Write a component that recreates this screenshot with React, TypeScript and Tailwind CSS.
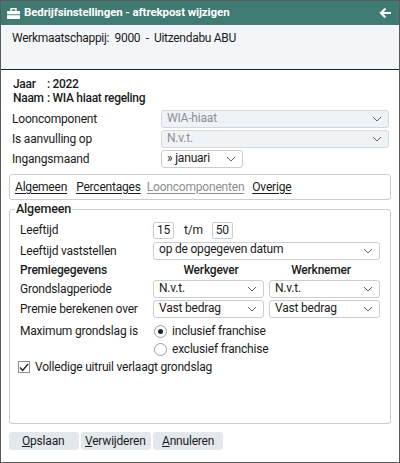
import React, { useState } from 'react';

const Chevron = () => (
  <svg width="10" height="6" viewBox="0 0 10 6" className="shrink-0">
    <path d="M1 1l4 4 4-4" fill="none" stroke="#666" strokeWidth="1" />
  </svg>
);

const Select = ({ value, width, disabled }: { value: string; width: string; disabled?: boolean }) => (
  <div
    className={`${width} h-[18px] flex items-center justify-between pl-[5px] pr-[6px] border rounded-[3px] ${
      disabled ? 'bg-[#f0f3f6] border-[#d3d8dc] text-[#8a8f94]' : 'bg-white border-[#c9ced2] text-[#1b1b1b]'
    }`}
  >
    <span className="leading-none -mt-[3px]">{value}</span>
    <Chevron />
  </div>
);

const Radio = ({ on, label, onClick }: { on: boolean; label: string; onClick: () => void }) => (
  <label className="flex items-center h-[18px] gap-[5px] pl-[1px]" onClick={onClick}>
    <span className="w-[13px] h-[13px] rounded-full border border-[#9aa0a5] bg-white flex items-center justify-center">
      {on && <span className="w-[5px] h-[5px] rounded-full bg-[#222]" />}
    </span>
    {label}
  </label>
);

export default function App() {
  const [incl, setIncl] = useState(true);
  const [checked, setChecked] = useState(true);

  return (
    <div
      className="w-[400px] h-[463px] bg-white border border-[#5a5a5a] flex flex-col text-[12px] tracking-[-0.2px] text-[#1b1b1b]"
      style={{ fontFamily: 'Roboto, "Liberation Sans", sans-serif' }}
    >
      {/* titelbalk */}
      <div className="h-[24px] bg-[#3f7b72] flex items-center justify-between pl-[6px] pr-[7px] shrink-0">
        <div className="flex items-center gap-[4px] text-white font-bold text-[11.5px] tracking-[-0.1px]">
          <svg width="13" height="11" viewBox="0 0 13 11">
            <rect x="4" y="0.7" width="5" height="2.8" fill="none" stroke="white" strokeWidth="1.3" />
            <rect x="0" y="3" width="13" height="3.3" fill="white" />
            <rect x="0" y="7.2" width="13" height="3.8" fill="white" />
          </svg>
          <span>Bedrijfsinstellingen - aftrekpost wijzigen</span>
        </div>
        <svg width="13" height="12" viewBox="0 0 13 12">
          <path d="M12 6H2M6.5 1.5L2 6l4.5 4.5" fill="none" stroke="white" strokeWidth="2.2" />
        </svg>
      </div>

      <div className="h-[45px] bg-[#f3f6f9] border-b border-[#222] pl-[11px] pt-[5px] leading-[16px] shrink-0 tracking-[-0.3px]">
        Werkmaatschappij:&nbsp; 9000&nbsp; -&nbsp; Uitzendabu ABU
      </div>

      <div className="flex-1 flex flex-col px-[8px] pt-[7px]">
        <div className="pl-[4px] font-medium leading-[14px] tracking-[-0.3px]">
          <div className="flex"><span className="w-[34px]">Jaar</span><span>: 2022</span></div>
          <div className="flex"><span className="w-[34px]">Naam</span><span>: WIA hiaat regeling</span></div>
        </div>

        <div className="flex flex-col gap-[2px] mt-[5px] pl-[3px]">
          <div className="flex items-center h-[18px]">
            <div className="w-[149px] shrink-0">Looncomponent</div>
            <Select value="WIA-hiaat" width="w-[228px]" disabled />
          </div>
          <div className="flex items-center h-[18px]">
            <div className="w-[149px] shrink-0">Is aanvulling op</div>
            <Select value="N.v.t." width="w-[228px]" disabled />
          </div>
          <div className="flex items-center h-[18px]">
            <div className="w-[149px] shrink-0">Ingangsmaand</div>
            <Select value="» januari" width="w-[82px]" />
          </div>
        </div>

        <div className="mt-[6px] h-[26px] border border-[#c9ced2] rounded-[3px] flex items-center pl-[5px] pb-[1px]">
          <a className="underline underline-offset-2">Algemeen</a>
          <a className="underline underline-offset-2 ml-[9px]">Percentages</a>
          <a className="underline underline-offset-2 ml-[6px] text-[#8a8f94]">Looncomponenten</a>
          <a className="underline underline-offset-2 ml-[8px]">Overige</a>
        </div>

        <fieldset className="mt-[1px] h-[223px] border border-[#c9ced2] rounded-[3px] pl-[10px] pr-[8px] pb-0 pt-0 min-w-0">
          <legend className="px-[1px] ml-[-5px] font-medium leading-[16px] text-[12.5px]">Algemeen</legend>
          <div className="flex flex-col mt-[3px]">
            <div className="flex items-center h-[20px]">
              <div className="w-[133px] shrink-0">Leeftijd</div>
              <div className="w-[21px] h-[17px] border border-[#c9ced2] rounded-[2px] flex items-center justify-center leading-none">15</div>
              <span className="ml-[10px]">t/m</span>
              <div className="ml-[9px] w-[21px] h-[17px] border border-[#c9ced2] rounded-[2px] flex items-center justify-center leading-none">50</div>
            </div>
            <div className="flex items-center h-[21px]">
              <div className="w-[133px] shrink-0">Leeftijd vaststellen</div>
              <Select value="op de opgegeven datum" width="w-[227px]" />
            </div>
            <div className="flex items-center h-[18px] font-medium">
              <div className="w-[133px] shrink-0">Premiegegevens</div>
              <div className="w-[116px] text-center">Werkgever</div>
              <div className="w-[104px] text-center">Werknemer</div>
            </div>
            <div className="flex items-center h-[20px]">
              <div className="w-[133px] shrink-0">Grondslagperiode</div>
              <Select value="N.v.t." width="w-[111px]" />
              <div className="ml-[5px]"><Select value="N.v.t." width="w-[111px]" /></div>
            </div>
            <div className="flex items-center h-[20px]">
              <div className="w-[133px] shrink-0">Premie berekenen over</div>
              <Select value="Vast bedrag" width="w-[111px]" />
              <div className="ml-[5px]"><Select value="Vast bedrag" width="w-[111px]" /></div>
            </div>
            <div className="flex mt-[3px]">
              <div className="w-[133px] shrink-0 h-[18px] flex items-center">Maximum grondslag is</div>
              <div className="flex flex-col">
                <Radio on={incl} label="inclusief franchise" onClick={() => setIncl(true)} />
                <Radio on={!incl} label="exclusief franchise" onClick={() => setIncl(false)} />
              </div>
            </div>
            <label className="flex items-center h-[18px] gap-[5px] -ml-[2px]" onClick={() => setChecked(!checked)}>
              <span className="w-[12px] h-[12px] border border-[#8a8f94] bg-white flex items-center justify-center">
                {checked && (
                  <svg width="10" height="9" viewBox="0 0 10 9">
                    <path d="M1 4.5l2.7 3L9 1" fill="none" stroke="#222" strokeWidth="1.4" />
                  </svg>
                )}
              </span>
              Volledige uitruil verlaagt grondslag
            </label>
          </div>
        </fieldset>

        <div className="flex gap-[2px] mt-[8px]">
          <button className="w-[70px] h-[18px] bg-[#e3e8ec] rounded-[3px] text-left pl-[13px] leading-none">
            <u>O</u>pslaan
          </button>
          <button className="w-[70px] h-[18px] bg-[#e3e8ec] rounded-[3px] text-left pl-[4px] leading-none">
            <u>V</u>erwijderen
          </button>
          <button className="w-[70px] h-[18px] bg-[#e3e8ec] rounded-[3px] text-left pl-[9px] leading-none">
            <u>A</u>nnuleren
          </button>
        </div>
      </div>
    </div>
  );
}
